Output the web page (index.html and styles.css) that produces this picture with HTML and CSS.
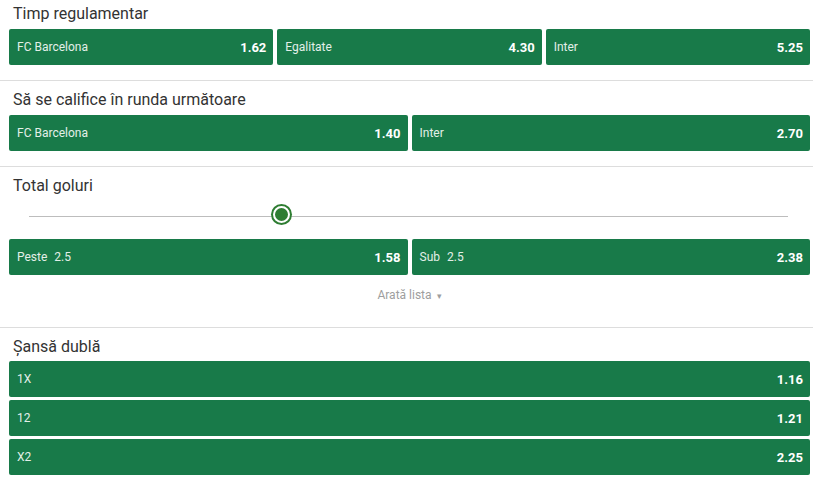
FILE: index.html
```html
<!DOCTYPE html>
<html>
<head>
  <title>Pariuri - FC Barcelona vs Inter</title>
  <link rel="stylesheet" href="styles.css">
</head>
<body>

  <div class="market">
    <div class="market-title">Timp regulamentar</div>
    <div class="odds-row">
      <div class="odd"><span class="odd-label">FC Barcelona</span><span class="odd-value">1.62</span></div>
      <div class="odd"><span class="odd-label">Egalitate</span><span class="odd-value">4.30</span></div>
      <div class="odd"><span class="odd-label">Inter</span><span class="odd-value">5.25</span></div>
    </div>
  </div>

  <div class="market">
    <div class="market-title">Să se califice în runda următoare</div>
    <div class="odds-row">
      <div class="odd"><span class="odd-label">FC Barcelona</span><span class="odd-value">1.40</span></div>
      <div class="odd"><span class="odd-label">Inter</span><span class="odd-value">2.70</span></div>
    </div>
  </div>

  <div class="market">
    <div class="market-title">Total goluri</div>
    <div class="slider">
      <div class="slider-track">
        <div class="slider-knob"></div>
      </div>
    </div>
    <div class="odds-row">
      <div class="odd"><span class="odd-label">Peste <span class="line">2.5</span></span><span class="odd-value">1.58</span></div>
      <div class="odd"><span class="odd-label">Sub <span class="line">2.5</span></span><span class="odd-value">2.38</span></div>
    </div>
    <div class="show-list">Arată lista <span class="caret">&#9662;</span></div>
  </div>

  <div class="market">
    <div class="market-title">Șansă dublă</div>
    <div class="odds-list">
      <div class="odd"><span class="odd-label">1X</span><span class="odd-value">1.16</span></div>
      <div class="odd"><span class="odd-label">12</span><span class="odd-value">1.21</span></div>
      <div class="odd"><span class="odd-label">X2</span><span class="odd-value">2.25</span></div>
    </div>
  </div>

</body>
</html>
```

FILE: styles.css
```css
body {
  background-color: #ffffff;
  font-family: Roboto, "Noto Sans", Arial, sans-serif;
  color: #333333;
  margin: 0;
  padding: 0;
}

.market {
  padding: 5px 3px 15px 9px;
  border-bottom: 1px solid #dddddd;
}

.market:first-child {
  padding-top: 0;
}

.market:last-child .market-title {
  height: 28px;
}

.market-title {
  height: 29px;
  line-height: 28px;
  padding-left: 4px;
  font-size: 16px;
  color: #333333;
}

.odds-row {
  display: flex;
  gap: 4px;
}

.odds-row .odd {
  flex: 1;
}

.odds-list {
  display: flex;
  flex-direction: column;
  gap: 3px;
}

.odd {
  height: 36px;
  display: flex;
  align-items: center;
  justify-content: space-between;
  padding: 0 7px 0 8px;
  background-color: #187a49;
  border-radius: 2px;
  color: #ffffff;
  box-sizing: border-box;
}

.odd-label {
  font-size: 12px;
  color: #e3efe8;
}

.odd-label .line {
  margin-left: 4px;
}

.odd-value {
  font-size: 13px;
  font-weight: bold;
  color: #ffffff;
}

.slider {
  height: 30px;
  margin-bottom: 8px;
  padding: 0 22px 0 20px;
  display: flex;
  align-items: center;
}

.slider-track {
  position: relative;
  flex: 1;
  height: 1px;
  background-color: #bdbdbd;
}

.slider-knob {
  position: absolute;
  left: 33.5%;
  top: -10px;
  margin-left: -10px;
  width: 13px;
  height: 13px;
  border-radius: 50%;
  background-color: #2e7d32;
  border: 2px solid #ffffff;
  box-shadow: 0 0 0 2px #2e7d32;
}

.show-list {
  text-align: center;
  font-size: 12px;
  color: #9e9e9e;
  padding: 12px 0 8px;
  line-height: 16px;
}

.show-list .caret {
  font-size: 9px;
  margin-left: 2px;
}
```
